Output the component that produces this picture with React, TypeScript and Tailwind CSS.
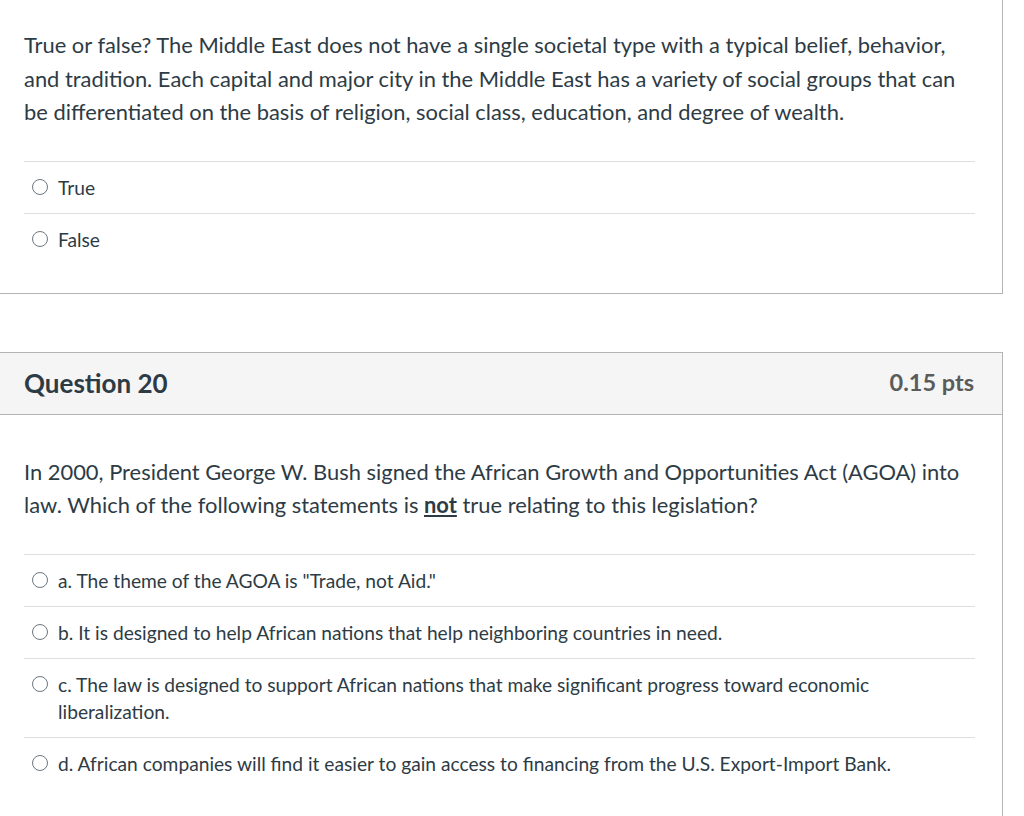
import React from "react";

type Option = { id: string; label: string };

function Radio() {
  return (
    <span className="mt-[5px] h-[16px] w-[16px] shrink-0 rounded-full border border-[#6b7780] bg-white" />
  );
}

function Answers({ options }: { options: Option[] }) {
  return (
    <div>
      {options.map((opt, i) => (
        <div
          key={opt.id}
          className={`flex items-start gap-[10px] py-[12px] pl-[8px] ${i > 0 ? "border-t border-[#dcdfe2]" : ""}`}
        >
          <Radio />
          <span className="text-[19.2px] leading-[27px] text-[#2d3b45]">{opt.label}</span>
        </div>
      ))}
    </div>
  );
}

export default function App() {
  const q19 = [
    { id: "t", label: "True" },
    { id: "f", label: "False" },
  ];

  const q20 = [
    { id: "a", label: 'a. The theme of the AGOA is "Trade, not Aid."' },
    { id: "b", label: "b. It is designed to help African nations that help neighboring countries in need." },
    {
      id: "c",
      label: "c. The law is designed to support African nations that make significant progress toward economic liberalization.",
    },
    { id: "d", label: "d. African companies will find it easier to gain access to financing from the U.S. Export-Import Bank." },
  ];

  return (
    <div className="h-[816px] overflow-hidden bg-white font-['Lato','Liberation_Sans',sans-serif] text-[#2d3b45]">
      <div className="w-[1003px]">
        {/* question 19, top cut off */}
        <section className="border-b border-r border-[#b4b4b4] pb-[28px]">
          <div className="pl-[24px] pr-[27px] pt-[28px]">
            <p className="text-[21.9px] leading-[33.5px]">
              True or false? The Middle East does not have a single societal type with a typical belief, behavior,
              and tradition. Each capital and major city in the Middle East has a variety of social groups that can
              be differentiated on the basis of religion, social class, education, and degree of wealth.
            </p>
            <div className="mt-[32px] border-t border-[#dcdfe2]">
              <Answers options={q19} />
            </div>
          </div>
        </section>

        {/* question 20, bottom cut off */}
        <section className="mt-[58px] border-r border-t border-[#b4b4b4] pb-[40px]">
          <header className="flex h-[62px] items-center justify-between border-b border-[#b4b4b4] bg-[#f5f5f5] pl-[24px] pr-[28px]">
            <h2 className="text-[26px] font-bold text-[#2d3b45]">Question 20</h2>
            <span className="text-[23.5px] font-bold text-[#5b5b5b]">0.15 pts</span>
          </header>
          <div className="pl-[24px] pr-[27px] pt-[40px]">
            <p className="text-[21.9px] leading-[33.5px]">
              In 2000, President George W. Bush signed the African Growth and Opportunities Act (AGOA) into law.
              Which of the following statements is <span className="font-bold underline">not</span> true relating to
              this legislation?
            </p>
            <div className="mt-[32px] border-t border-[#dcdfe2]">
              <Answers options={q20} />
            </div>
          </div>
        </section>
      </div>
    </div>
  );
}
